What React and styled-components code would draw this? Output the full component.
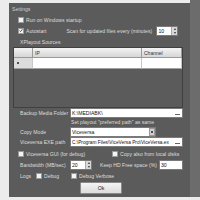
import React from "react";
import styled, { createGlobalStyle } from "styled-components";

const Global = createGlobalStyle`
  html, body { margin: 0; padding: 0; background: #ececec; }
  body { font-family: "Liberation Sans", "DejaVu Sans", sans-serif; }
  * { box-sizing: border-box; }
`;

const Screen = styled.div`
  width: 200px;
  height: 200px;
  padding: 3px 0 3px 9px;
  display: flex;
`;

const Window = styled.div`
  width: 181px;
  height: 194px;
  padding-top: 2px;
  background: #5b5b5b;
  color: #dedede;
  font-size: 5.1px;
  display: flex;
  flex-direction: column;
`;

const RightStrip = styled.div`
  width: 10px;
  height: 197px;
  margin-top: -3px;
  background: #6c6c6c;
`;

const Title = styled.div`
  height: 9px;
  line-height: 8px;
  padding-left: 3px;
  color: #d0d0d0;
`;

const Row = styled.div`
  display: flex;
  align-items: center;
  height: ${(p) => p.h || 10}px;
  padding-left: ${(p) => p.pl || 0}px;
  margin-top: ${(p) => p.mt || 0}px;
`;

const Box = styled.span`
  width: 6px;
  height: 6px;
  background: #f4f4f4;
  border: 1px solid #9a9a9a;
  display: inline-flex;
  align-items: center;
  justify-content: center;
  flex: none;
`;

const CheckWrap = styled.label`
  display: inline-flex;
  align-items: center;
  gap: 2px;
  margin-left: ${(p) => p.ml || 0}px;
  white-space: nowrap;
`;

const Check = ({ checked, children, ml }) => (
  <CheckWrap ml={ml}>
    <Box>
      {checked && (
        <svg width="5" height="5" viewBox="0 0 5 5">
          <path d="M0.7 2.6 L2 3.9 L4.3 0.9" stroke="#222" strokeWidth="0.9" fill="none" />
        </svg>
      )}
    </Box>
    <span>{children}</span>
  </CheckWrap>
);

const Label = styled.span`
  width: ${(p) => p.w || 50}px;
  margin-left: ${(p) => p.ml || 0}px;
  white-space: nowrap;
  flex: none;
`;

const Input = styled.div`
  width: ${(p) => p.w}px;
  height: 10px;
  background: #fff;
  border: 1px solid #7a7a7a;
  color: #111;
  display: flex;
  align-items: center;
  padding-left: 1px;
  white-space: nowrap;
  overflow: hidden;
  flex: none;
`;

const InputText = styled.span`
  flex: 1;
  overflow: hidden;
  font-size: ${(p) => p.fs || 5.1}px;
`;

const Ellipsis = styled.span`
  width: 5px;
  height: 1px;
  background: #666;
  margin: 3px 2px 0 1px;
  flex: none;
`;

const Spin = styled.div`
  width: 6px;
  height: 8px;
  background: #d8d8d8;
  border-left: 1px solid #aaa;
  display: flex;
  flex-direction: column;
  align-items: center;
  justify-content: space-around;
  flex: none;
`;

const Arrow = styled.span`
  width: 0;
  height: 0;
  border-left: 1.5px solid transparent;
  border-right: 1.5px solid transparent;
  ${(p) => (p.up ? "border-bottom: 2px solid #333;" : "border-top: 2px solid #333;")}
`;

const DropBtn = styled.div`
  width: 6px;
  height: 8px;
  background: #cfcfcf;
  border: 1px solid #999;
  display: flex;
  align-items: center;
  justify-content: center;
  flex: none;
`;

const Table = styled.div`
  margin-left: 4px;
  width: 170px;
  height: 61px;
  border: 1px solid #404040;
  background: #5b5b5b;
  display: flex;
  flex-direction: column;
`;

const TRow = styled.div`
  display: flex;
  height: ${(p) => p.h}px;
`;

const HCell = styled.div`
  width: ${(p) => p.w}px;
  flex: ${(p) => (p.grow ? 1 : "none")};
  background: linear-gradient(#f3f3f3, #d6d6d6);
  border-right: 1px solid #9a9a9a;
  border-bottom: 1px solid #9a9a9a;
  color: #333;
  display: flex;
  align-items: center;
  padding-left: 2px;
  font-size: 5px;
`;

const DCell = styled.div`
  width: ${(p) => p.w}px;
  flex: ${(p) => (p.grow ? 1 : "none")};
  background: ${(p) => (p.head ? "#dcdcdc" : "#fff")};
  border-right: 1px solid #c8c8c8;
  border-bottom: 1px solid #a0a0a0;
  display: flex;
  align-items: center;
  padding-left: 3px;
`;

const Dot = styled.span`
  width: 2px;
  height: 2px;
  border-radius: 50%;
  background: #222;
`;

const Note = styled.div`
  height: 9px;
  line-height: 9px;
  padding-left: 62px;
  white-space: nowrap;
`;

const OkButton = styled.button`
  margin-left: 71px;
  width: 42px;
  height: 12px;
  background: linear-gradient(#f4f4f4, #dcdcdc);
  border: 1px solid #8a8a8a;
  border-radius: 1px;
  font-family: inherit;
  font-size: 5.2px;
  color: #222;
  padding: 0;
`;

const Num = ({ w, v }) => (
  <Input w={w}>
    <InputText>{v}</InputText>
    <Spin>
      <Arrow up />
      <Arrow />
    </Spin>
  </Input>
);

export default function App() {
  return (
    <>
      <Global />
      <Screen>
        <Window>
          <Title>Settings</Title>
          <Row h={10} pl={9} mt={1}>
            <Check>Run on Windows startup</Check>
          </Row>
          <Row h={11} pl={9}>
            <Check checked>Autostart</Check>
            <Label w={90} ml={20}>Scan for updated files every (minutes)</Label>
            <Num w={22} v="10" />
          </Row>
          <Row h={11} pl={11}>XPlayout Sources</Row>
          <Table>
            <TRow h={10}>
              <HCell w={19} />
              <HCell grow>IP</HCell>
              <HCell w={40}>Channel</HCell>
            </TRow>
            <TRow h={11}>
              <DCell w={19} head>
                <Dot />
              </DCell>
              <DCell grow />
              <DCell w={40} />
            </TRow>
          </Table>
          <Row h={11} pl={11} mt={-1}>
            <Label w={50}>Backup Media Folder</Label>
            <Input w={113}>
              <InputText>K:\MEDIABK\</InputText>
              <Ellipsis />
            </Input>
          </Row>
          <Note>Set playout "preferred path" as same</Note>
          <Row h={10} pl={11}>
            <Label w={50}>Copy Mode</Label>
            <Input w={86}>
              <InputText>Viceversa</InputText>
              <DropBtn>
                <Dot />
              </DropBtn>
            </Input>
          </Row>
          <Row h={10} pl={11}>
            <Label w={50}>Viceversa EXE path</Label>
            <Input w={113}>
              <InputText fs={4.8}>C:\Program Files\ViceVersa Pro\ViceVersa.ex</InputText>
              <Ellipsis />
            </Input>
          </Row>
          <Row h={11} pl={9} mt={1}>
            <Check>Viceversa GUI (for debug)</Check>
            <Check ml={27}>Copy also from local disks</Check>
          </Row>
          <Row h={11} pl={11}>
            <Label w={50}>Bandwidth (MB/sec)</Label>
            <Num w={22} v="20" />
            <Label w={59} ml={8}>Keep HD Free space (%)</Label>
            <Input w={24}>
              <InputText>30</InputText>
            </Input>
          </Row>
          <Row h={11} pl={11}>
            <Label w={16}>Logs</Label>
            <Check>Debug</Check>
            <Check ml={12}>Debug Verbose</Check>
          </Row>
          <Row h={14}>
            <OkButton>Ok</OkButton>
          </Row>
        </Window>
        <RightStrip />
      </Screen>
    </>
  );
}
